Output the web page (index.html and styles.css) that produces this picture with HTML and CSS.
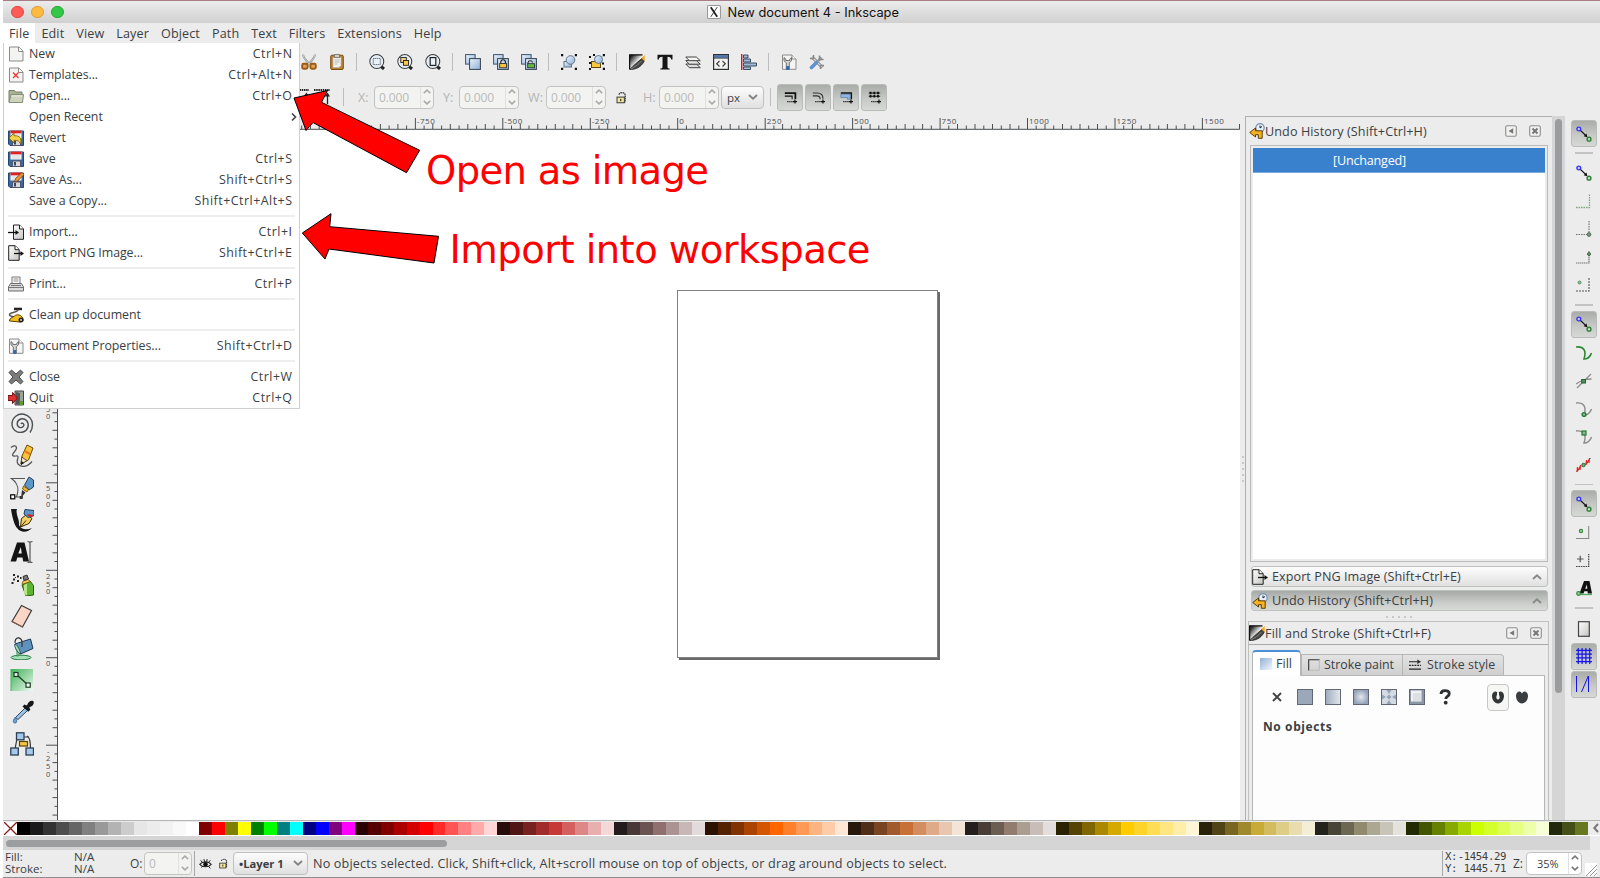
FILE: index.html
```html
<!DOCTYPE html>
<html lang="en">
<head>
<meta charset="utf-8">
<title>New document 4 - Inkscape</title>
<link rel="stylesheet" href="styles.css">
</head>
<body>
<svg class="defs" width="0" height="0">
  <defs>
    <linearGradient id="gBlue" x1="0" y1="0" x2="1" y2="1"><stop offset="0" stop-color="#eaf3fc"/><stop offset="1" stop-color="#8fb0d6"/></linearGradient>
    <linearGradient id="gGray" x1="0" y1="0" x2="1" y2="1"><stop offset="0" stop-color="#fff"/><stop offset="1" stop-color="#c4c4c0"/></linearGradient>
    <linearGradient id="gBlack" gradientUnits="userSpaceOnUse" x1="0" y1="0" x2="9" y2="8"><stop offset="0" stop-color="#000"/><stop offset=".3" stop-color="#2a2a2a"/><stop offset="1" stop-color="#fff"/></linearGradient>
    <linearGradient id="gGreen" x1="0" y1="0" x2="1" y2="1"><stop offset="0" stop-color="#3db358"/><stop offset=".6" stop-color="#a5dbb0"/><stop offset="1" stop-color="#f4fbf5"/></linearGradient>
    <linearGradient id="gSlate" x1="0" y1="0" x2="1" y2="0"><stop offset="0" stop-color="#9eabbd"/><stop offset="1" stop-color="#e4e8ee"/></linearGradient>
    <radialGradient id="gSlateR"><stop offset="0" stop-color="#e4e9f0"/><stop offset="1" stop-color="#95a3b8"/></radialGradient>
    <symbol id="new" viewBox="0 0 16 16"><path d="M1.500 1h9.500l4 4v10H1.500z" fill="#f3f3f1" stroke="#8a8c88"/><path d="M10.500 1v4.500H15" fill="#fff" stroke="#8a8c88"/></symbol>
    <symbol id="tmpl" viewBox="0 0 16 16"><path d="M1.500 1h9.500l4 4v10H1.500z" fill="#f3f3f1" stroke="#8a8c88"/><path d="M10.500 1v4.500H15" fill="#fff" stroke="#8a8c88"/><path d="M5 5.500l5.500 5.500M10.500 5.500L5 11" stroke="#e33" stroke-width="1.200"/></symbol>
    <symbol id="open" viewBox="0 0 16 16"><path d="M1 14V2.500h5.500l1 1.500H14v10z" fill="#aab294" stroke="#78806a"/><path d="M3 6.500h12.500l-1 8H1z" fill="#cdd3bd" stroke="#868e76"/><path d="M3.500 8h10.500" stroke="#eef0e6"/></symbol>
    <symbol id="save" viewBox="0 0 16 16"><path d="M.500 1h15v14.500H2l-1.500-1.500z" fill="#3c69a5" stroke="#234775"/><path d="M2.500 1h11v7.500h-11z" fill="#fff"/><path d="M2.500 .600h11v2.800h-11z" fill="#d22"/><path d="M3.500 5h9M3.500 7h9" stroke="#b9bcc0" stroke-width=".8"/><path d="M4.500 10h8v5.500h-8z" fill="#d8dadc" stroke="#556"/><path d="M6 11h2v3.500H6z" fill="#334a66"/></symbol>
    <symbol id="revert" viewBox="0 0 16 16"><use href="#save"/><path d="M1 8l5-5v2.800c6-.500 8 3 6.500 8.200C11.500 11 9.500 10 6 10.300V13z" fill="#f3d34a" stroke="#8a6a00" stroke-width=".9"/></symbol>
    <symbol id="saveas" viewBox="0 0 16 16"><use href="#save"/><path d="M6.500 10l1-3.500L14 .500l2 2-6.300 6.500z" fill="#e8963a" stroke="#7a4210" stroke-width=".8"/></symbol>
    <symbol id="import" viewBox="0 0 16 16"><path d="M5.500 1h6l4 4v10.300h-10z" fill="url(#gGray)" stroke="#222"/><path d="M11.500 1v4h4" fill="#fff" stroke="#222"/><path d="M0 8.500h8" stroke="#111" stroke-width="1.300"/><path d="M7.500 6l3.500 2.500L7.500 11z" fill="#111"/></symbol>
    <symbol id="export" viewBox="0 0 16 16"><path d="M.700 .700h6.500l4 4v10.600H.700z" fill="url(#gGray)" stroke="#222"/><path d="M7 .700v4h4" fill="#fff" stroke="#222"/><path d="M6 8.500h7" stroke="#111" stroke-width="1.300"/><path d="M12.500 6l3.500 2.500-3.500 2.500z" fill="#111"/></symbol>
    <symbol id="print" viewBox="0 0 16 16"><path d="M4 8V1h8v7" fill="#fff" stroke="#777"/><path d="M5.500 3h5M5.500 5h5" stroke="#888"/><path d="M2.500 7.500h11l2 3.500v4H.500v-4z" fill="#dcdcda" stroke="#6b6b69"/><path d="M1 11.500h14M3 9.500h10" stroke="#777"/></symbol>
    <symbol id="clean" viewBox="0 0 16 16"><path d="M6 .700h8v2.500H6z" fill="#222"/><path d="M10 2.500C10 6 1.500 5 1.500 7.500s3 1.500 5 2.500" fill="none" stroke="#555" stroke-width="1.500"/><path d="M1.500 14c0-3.500 3-3 5-5s7-1.500 8.500 2.500v2.500l-3 1z" fill="#f6bd22" stroke="#5b4300"/><circle cx="13" cy="13" r="2.500" fill="#222"/><circle cx="13" cy="13" r="1" fill="#ccc"/></symbol>
    <symbol id="docprop" viewBox="0 0 16 16"><path d="M1.500 1H11l4 4v10.300H1.500z" fill="#f5f5f3" stroke="#8b8d89"/><path d="M11 1v4h4" fill="#fff" stroke="#8b8d89"/><path d="M3 3.500v3.300l2.300 2v6.200h3V8.800l2.200-2V3.500L8.800 5v1.500h-4V5z" fill="#d4d6d8" stroke="#666" stroke-width=".9"/><path d="M5.300 12h3V16h-3z" fill="#3a68b0"/></symbol>
    <symbol id="prefs" viewBox="0 0 16 16"><path d="M3 3l10.500 10.500" stroke="#777" stroke-width="3"/><path d="M3 3l10.500 10.500" stroke="#ddd" stroke-width="1.400"/><path d="M12.500 3.500L8 8" stroke="#999" stroke-width="2.500"/><path d="M7.500 8.500L2.500 13.500" stroke="#5f92cf" stroke-width="3.600" stroke-linecap="round"/><path d="M1 4.500h3.500V1M11.500 15v-3.500H15M10.500 1.500v4h4" fill="none" stroke="#888" stroke-width="1.500"/></symbol>
    <symbol id="close" viewBox="0 0 16 16"><path d="M1 3.500L3.500 1 8 5l4.500-4L15 3.500 11 8l4 4.500-2.500 2.500L8 11l-4.500 4L1 12.500 5 8z" fill="#7b7d7b" stroke="#4b4d4b"/></symbol>
    <symbol id="quit" viewBox="0 0 16 16"><path d="M7 1h8.500v14H7z" fill="#9aa596" stroke="#444"/><path d="M8 2l4 1v12l-4-1z" fill="#555"/><path d="M11.500 11h3.500v4h-3.500z" fill="#5d9b33"/><path d="M0 5.500h4.500V2.500l5 5.500-5 5.500v-3H0z" fill="#d33" stroke="#7c1010"/></symbol>
    <symbol id="cut" viewBox="0 0 16 16"><path d="M2 .500c.5 4 4 6.500 6.500 10M14 .500c-.5 4-4 6.500-6.500 10" fill="none" stroke="#8f9390" stroke-width="2"/><path d="M2 .500c.5 4 4 6.500 6.500 10M14 .500c-.5 4-4 6.500-6.500 10" fill="none" stroke="#ecece8" stroke-width=".7"/><rect x="1.200" y="9.700" width="5.400" height="5.100" rx="1.500" fill="#e0a35a" stroke="#9a5c16" stroke-width="1.900"/><rect x="9.400" y="9.700" width="5.400" height="5.100" rx="1.500" fill="#e0a35a" stroke="#9a5c16" stroke-width="1.900"/></symbol>
    <symbol id="paste" viewBox="0 0 16 16"><rect x="1.700" y="1.200" width="12.600" height="14.300" rx="1.200" fill="#b98132" stroke="#7a4d10"/><path d="M4 3.500h8v8l-2 2H4z" fill="#f1f1ee" stroke="#b3b3ae" stroke-width=".7"/><path d="M5.500 .500h5v3h-5z" fill="#cfd0cc" stroke="#6d6e6a" stroke-width=".8"/><path d="M5.500 6h5M5.500 8h5M5.500 10h3" stroke="#aaa" stroke-width=".8"/></symbol>
    <symbol id="lens" viewBox="0 0 16 16"><path d="M11.500 12l3.500 3" stroke="#222" stroke-width="3"/><circle cx="7.800" cy="7.500" r="6.900" fill="#dce8f6" stroke="#3c4043" stroke-width="1.200"/><circle cx="7.800" cy="7.500" r="5.900" fill="none" stroke="#fff" stroke-width=".7"/></symbol>
    <symbol id="zsel" viewBox="0 0 16 16"><use href="#lens"/><rect x="4.300" y="4.500" width="7" height="6" fill="#e9f1fa" stroke="#333" stroke-dasharray="1 1" stroke-width=".9"/></symbol>
    <symbol id="zdraw" viewBox="0 0 16 16"><use href="#lens"/><rect x="3.800" y="3.500" width="5.500" height="5" fill="#f8d27a" stroke="#222" stroke-width=".9"/><rect x="6.500" y="6.500" width="5" height="4.800" fill="#f8c850" stroke="#222" stroke-width=".9"/></symbol>
    <symbol id="zpage" viewBox="0 0 16 16"><use href="#lens"/><rect x="5.200" y="3.600" width="5.600" height="7.800" fill="#eef2f7" stroke="#222" stroke-width="1.200"/></symbol>
    <symbol id="dup" viewBox="0 0 16 16"><rect x=".600" y=".600" width="9.500" height="9.500" fill="url(#gBlue)" stroke="#3a536e"/><rect x="4.600" y="4.600" width="10.800" height="10.800" fill="url(#gBlue)" stroke="#33404d"/></symbol>
    <symbol id="clone" viewBox="0 0 16 16"><use href="#dup"/><path d="M7.800 9.500V8a2.300 2.300 0 014.600 0v1.500" fill="none" stroke="#222" stroke-width="1.100"/><rect x="6.700" y="9.500" width="6.800" height="4.300" fill="#f8c23a" stroke="#222" stroke-width=".8"/></symbol>
    <symbol id="unclone" viewBox="0 0 16 16"><use href="#dup"/><path d="M7 10V8.500a2.300 2.300 0 014.500 0" fill="none" stroke="#222" stroke-width="1.100"/><rect x="6.700" y="9.700" width="6.800" height="4.100" fill="#60b846" stroke="#222" stroke-width=".8"/></symbol>
    <symbol id="group" viewBox="0 0 16 16"><rect x="3" y="7.500" width="7.500" height="5.500" fill="url(#gBlue)" stroke="#5a748e"/><circle cx="9.500" cy="6" r="4.300" fill="url(#gBlue)" stroke="#5a748e"/><path d="M0 0h2.200v2.200H0zM13.800 0H16v2.200h-2.200zM0 13.800h2.200V16H0zM13.800 13.800H16V16h-2.200z" fill="#111"/></symbol>
    <symbol id="ungroup" viewBox="0 0 16 16"><rect x="2.500" y="7.500" width="9" height="6" fill="#f8c93c" stroke="#5d4700"/><circle cx="9.500" cy="5.500" r="4" fill="url(#gBlue)" stroke="#5a748e"/><path d="M0 2h2v2H0zM4 0h2v2H4zM13.800 0H16v2.200h-2.200zM0 14h2v2H0zM13.800 13.800H16V16h-2.200zM0 8h2v2H0zM13 8.500h2v2h-2z" fill="#111"/></symbol>
    <symbol id="fillstroke" viewBox="0 0 16 16"><path d="M.600 .800H15L6 13 .600 15.300z" fill="url(#gBlack)"/><path d="M.600 15.300V.800H13.500" fill="none" stroke="#111" stroke-width="1.200"/><path d="M15.300 7L13 4.500C9.500 7 4 12 .700 15.500 5 15.500 11.500 14.500 15.300 7z" fill="#454543" stroke="#111" stroke-width=".7"/><path d="M2 15C6 13 9.500 10.500 12.500 7" stroke="#999" stroke-width=".8" fill="none"/><path d="M12.300 4L15.700 1v6.500z" fill="#f7a81c"/></symbol>
    <symbol id="text" viewBox="0 0 16 16"><path d="M.500 .800h15v4.700h-1.300c-.3-2-1-2.800-3.700-2.800v9.800c0 1.500.5 2 2.200 2V15.500H3.300V14.500c1.700 0 2.200-.5 2.200-2V2.700c-2.700 0-3.400.8-3.700 2.800H.500z" fill="#161616"/></symbol>
    <symbol id="layers" viewBox="0 0 16 16"><path d="M.800 10h10.500l4 3.700h-11z" fill="#ddd" stroke="#444"/><path d="M.800 6.500h10.500l4 3.700h-11z" fill="#e4e4e2" stroke="#444"/><path d="M.800 3h10.500l4 3.700h-11z" fill="#f6f6f4" stroke="#444"/></symbol>
    <symbol id="xml" viewBox="0 0 16 16"><rect x=".600" y=".600" width="14.800" height="14.800" fill="#f2f2f0" stroke="#2d3136" stroke-width="1.200"/><path d="M1 1h14v3H1z" fill="#5577a8"/><path d="M1 4.300h14" stroke="#2d3136" stroke-width=".7"/><path d="M6.500 7L3.700 9.700l2.800 2.800M9.500 7l2.800 2.700-2.800 2.800" fill="none" stroke="#444" stroke-width="1.200"/></symbol>
    <symbol id="align" viewBox="0 0 16 16"><path d="M.700 0v16" stroke="#d01818" stroke-width="1.400"/><path d="M2.500 1h4.500v3H2.500zM2.500 5h7v3h-7zM2.500 9h13v3h-13zM2.500 13h7v2.500h-7z" fill="#9fbbdc" stroke="#2d3e50" stroke-width=".9"/></symbol>
    <symbol id="lock" viewBox="0 0 16 16"><path d="M5 4.500C5 1 12.500 1 12.500 5v9" fill="none" stroke="#333" stroke-width="1.500" stroke-dasharray="2 .7"/><rect x="2.500" y="7.500" width="9" height="7" fill="#f6eaa0" stroke="#333" stroke-width="1.200"/><path d="M7 9.500v3" stroke="#443" stroke-width="1.600"/></symbol>
    <symbol id="aff1" viewBox="0 0 16 16"><path d="M1 2.700h13v7" fill="none" stroke="#111" stroke-width="2.200"/><path d="M1 6.300h9V10" fill="none" stroke="#111" stroke-width="1.300"/><path d="M4 13h8" stroke="#111" stroke-width="1.500" stroke-dasharray="1.500 1"/><path d="M11 13h5M13.500 10.500v5" stroke="#111" stroke-width="1.500"/></symbol>
    <symbol id="aff2" viewBox="0 0 16 16"><path d="M1 2.500h5.500c5 0 7 3 7 7M1 6h5c3 0 4 1.500 4 4" fill="none" stroke="#333" stroke-width="1.400"/><path d="M4 13h8" stroke="#111" stroke-width="1.500" stroke-dasharray="1.500 1"/><path d="M11 13h5M13.500 10.500v5" stroke="#111" stroke-width="1.500"/></symbol>
    <symbol id="aff3" viewBox="0 0 16 16"><path d="M1 2.500h13v7.500" fill="none" stroke="#111" stroke-width="1.700"/><path d="M1 4h11.500v6H9V8H1z" fill="#8fb6e6" stroke="#34618f" stroke-width=".6"/><path d="M4 13h8" stroke="#111" stroke-width="1.500" stroke-dasharray="1.500 1"/><path d="M11 13h5M13.500 10.500v5" stroke="#111" stroke-width="1.500"/></symbol>
    <symbol id="aff4" viewBox="0 0 16 16"><path d="M1 2.500h14M1 6.500h14" stroke="#111" stroke-width="1.200"/><path d="M2 2.500h13M2 6.500h13" stroke="#111" stroke-width="3" stroke-dasharray="2.300 2.300"/><path d="M4 13h8" stroke="#111" stroke-width="1.500" stroke-dasharray="1.500 1"/><path d="M11 13h5M13.500 10.500v5" stroke="#111" stroke-width="1.500"/></symbol>
    <symbol id="flat" viewBox="0 0 16 16"><path d="M0 1h16" stroke="#222" stroke-width="2" stroke-dasharray="1.500 .7"/><path d="M13.500 15V5" stroke="#222" stroke-width="1.300"/><path d="M10.500 7.500l3-4 2.500 4z" fill="#222"/></symbol>
    <symbol id="undo" viewBox="0 0 16 16"><circle cx="11" cy="4.800" r="4.200" fill="#e6effa" stroke="#7891b0" stroke-width="1.200"/><path d="M11 2.500V5l2-1.500" fill="none" stroke="#223" stroke-width="1"/><path d="M.700 9.500L6.500 5v2.800h6.700v7.500H9.300v-3.600H6.500V14z" fill="#f8b120" stroke="#4a3200" stroke-width=".9"/></symbol>
    <symbol id="nodes" viewBox="0 0 16 16"><path d="M4 4l7 6.700" stroke="#111" stroke-width="1.100"/><path d="M11.300 11.300L7.700 10.300l2.800-2.800z" fill="#111"/><circle cx="2.800" cy="3" r="1.900" fill="#c9c9f5" stroke="#33e" stroke-width="1.400"/><circle cx="13" cy="13.200" r="1.900" fill="#c5dcc7" stroke="#297f34" stroke-width="1.400"/></symbol>
    <symbol id="s1" viewBox="0 0 16 16"><path d="M0 14.500h13.500V1" fill="none" stroke="#82a584" stroke-width="1.300" stroke-dasharray="1.600 .9"/></symbol>
    <symbol id="s2" viewBox="0 0 16 16"><path d="M0 13.500h13V0" fill="none" stroke="#777" stroke-width="1.200" stroke-dasharray="1.600 .9"/><circle cx="13" cy="13.500" r="1.900" fill="#7a8f80" stroke="#5a7560"/></symbol>
    <symbol id="s3" viewBox="0 0 16 16"><path d="M0 14h13V2" fill="none" stroke="#777" stroke-width="1.200" stroke-dasharray="1.500 .5"/><circle cx="13" cy="5" r="1.500" fill="#7a8f80" stroke="#3d6a46"/></symbol>
    <symbol id="s4" viewBox="0 0 16 16"><path d="M0 14h13V1" fill="none" stroke="#555" stroke-width="1.100" stroke-dasharray="2 1"/><circle cx="3.500" cy="5.500" r="1.500" fill="#93b598" stroke="#5b9463"/></symbol>
    <symbol id="c0" viewBox="0 0 16 16"><path d="M0 2c7-1 11 3 8 12 4 0 6-2 7.500-6" fill="none" stroke="#2f8736" stroke-width="1.600"/></symbol>
    <symbol id="cg" viewBox="0 0 16 16"><path d="M0 2c7-1 11 3 8 12 4 0 6-2 7.500-6" fill="none" stroke="#8b8d8b" stroke-width="1.400"/></symbol>
    <symbol id="c1" viewBox="0 0 16 16"><path d="M1 15L15 1M0 11c6-4 9-5 15.500-5" fill="none" stroke="#8b8d8b" stroke-width="1.300"/><rect x="5.700" y="6.500" width="3.800" height="3.500" fill="#5b8d64" stroke="#1c662b"/></symbol>
    <symbol id="c2" viewBox="0 0 16 16"><use href="#cg"/><circle cx="8" cy="13.500" r="1.900" fill="#8fb6a0" stroke="#227a32" stroke-width="1.400"/></symbol>
    <symbol id="c3" viewBox="0 0 16 16"><use href="#cg"/><rect x="6" y="2" width="4" height="4" fill="#8fb6a0" stroke="#227a32" stroke-width="1.200"/></symbol>
    <symbol id="c4" viewBox="0 0 16 16"><path d="M0 15L15 1" stroke="#999"/><path d="M1.500 10l-.5 5M4.500 8l-.5 5M1.500 14l3-5M10.500 3l-.5 5M13.500 1L13 6M10.500 7l3-5" stroke="#d22" stroke-width="1.200"/><circle cx="7.500" cy="8" r="1.700" fill="#7cad88" stroke="#1c662b"/></symbol>
    <symbol id="o1" viewBox="0 0 16 16"><path d="M0 14.500h12.700V2" fill="none" stroke="#888" stroke-width="1.100"/><circle cx="5" cy="7" r="1.600" fill="#b5d6ba" stroke="#2f8a3b" stroke-width="1.200"/></symbol>
    <symbol id="o2" viewBox="0 0 16 16"><path d="M0 14.500h12.700V2" fill="none" stroke="#444" stroke-width="1.200" stroke-dasharray="1.600 .8"/><path d="M1 7h6.500M4.200 3.700v6.600" stroke="#555" stroke-width="1.200"/></symbol>
    <symbol id="o3" viewBox="0 0 16 16"><path d="M3.500 13.500L8 1h5.500l2.500 12.500h-4.200l-.3-2.300H8.300l-.8 2.300zM9.200 8.700h2.100L10.900 4.500z" fill="#111"/><path d="M3 14.500h13" stroke="#54a85b" stroke-width="1.300"/><circle cx="2.500" cy="13.500" r="1.800" fill="#a9cfb0" stroke="#2d8a38" stroke-width="1.200"/></symbol>
    <symbol id="page" viewBox="0 0 16 16"><rect x="2.500" y=".700" width="10.800" height="14.600" fill="url(#gGray)" stroke="#444" stroke-width="1.200"/></symbol>
    <symbol id="grid" viewBox="0 0 16 16"><path d="M0 2.300h16M0 6.100h16M0 9.900h16M0 13.700h16M2.300 0v16M6.100 0v16M9.900 0v16M13.700 0v16" stroke="#1414e6" stroke-width="1.200"/></symbol>
    <symbol id="guide" viewBox="0 0 16 16"><path d="M.500 0v16M12.500 0v16M12.300 0L5.500 16" stroke="#1414e6" stroke-width="1" fill="none"/></symbol>
    <symbol id="spiral" viewBox="0 0 24 24"><path d="M11 12c1-2 4 0 2.500 2.200-2 2.800-6.500 1-6.300-2.700.3-4.500 6-6.500 9.300-3 3.500 4 1.500 10-3.500 11.500C7 21.700 2 17.500 2 12 2 5.500 8 1 14 2.200c5 1 8.500 5.500 8.500 10.300 0 3-1 6-2.500 8" fill="none" stroke="#4a4f52" stroke-width="1.400"/></symbol>
    <symbol id="pencil" viewBox="0 0 24 24"><path d="M1 3.500c5-4 7 0 4 3.500S1 12.500 6 12s-1 4.500 2 8 9 3.500 14-2.500" fill="none" stroke="#555" stroke-width="1.200"/><path d="M11 20l1-8 5-11 6 3-4.500 12z" fill="#f8c33a" stroke="#6b4d00"/><path d="M14.500 7l5.500 3" stroke="#e8781c" stroke-width="2"/><path d="M11 20.500l.8-7.500 5 3.500z" fill="#f4e3c2" stroke="#333" stroke-width=".8"/><path d="M11 21l.5-4 2.500 2z" fill="#111"/></symbol>
    <symbol id="pen" viewBox="0 0 24 24"><path d="M15 2.500H1.500C9 8 9 14 6.500 21M2 21h11" fill="none" stroke="#555" stroke-width="1.200"/><path d="M14.500 9l4.500-8 4.500 3v7l-4.500 3z" fill="#5d97c9" stroke="#22405c"/><path d="M13.500 10l5 3.500-1.500 2.500-4.500-3z" fill="#f4b928" stroke="#5d4300" stroke-width=".8"/><path d="M12 14l3.500 2.500-4.500 5.500z" fill="#333"/><rect x=".700" y="18.800" width="4" height="4" fill="#fff" stroke="#111" stroke-width="1.300"/><rect x="9.700" y="20" width="3" height="3" fill="#333"/></symbol>
    <symbol id="callig" viewBox="0 0 24 24"><path d="M1 1h6C5 6 10 12 9 17c2 5 8 5 13 3-4 4.500-11 5-14.500.500C4 17 2 8 1 1z" fill="#161616"/><path d="M10.500 19l1-8.500 5-4 5.500 4-3 5z" fill="#f2cf68" stroke="#3d2c00"/><path d="M11 18.500l5-6" stroke="#3d2c00"/><path d="M15 1.500l9 1v5l-6 2-4-3.500z" fill="#5d97c9" stroke="#22405c"/><path d="M18 6l5 1-1 2.500-5-2z" fill="#d22"/></symbol>
    <symbol id="atext" viewBox="0 0 24 24"><path d="M.500 21.500L7 2.500h7.500L19 21.500h-5.800l-.7-4H7.300l-1.200 4zM8.300 13.500h3.500L10.800 7z" fill="#141414"/><path d="M17.500 1.500c2.500 0 2.500 1 2.500 1s0-1 2.500-1M17.500 22.500c2.500 0 2.500-1 2.500-1s0 1 2.500 1M20 2.500v19" fill="none" stroke="#555" stroke-width="1.200"/></symbol>
    <symbol id="spray" viewBox="0 0 24 24"><path d="M3 2h2v2H3zM7 3.500h2v2H7zM3 6.500h2v2H3zM7 8h2v2H7zM1.500 10h2v2h-2zM10 5h1.500v2H10zM5 5h1v1H5z" fill="#222"/><path d="M12 13l8-4 3.500 4.500V23L16 24z" fill="#5cb531" stroke="#2e5f14"/><path d="M14 22V13l3-1.500v12z" fill="#b8e48c"/><path d="M12 12.500l1-3.500 5-1.500 2.500 2z" fill="#f2ca63" stroke="#6b4d00" stroke-width=".8"/><path d="M13 4.500l4-1.500 1.500 4-4.500 1.500z" fill="#777" stroke="#333"/></symbol>
    <symbol id="eraser" viewBox="0 0 24 24"><path d="M2 17.500L11.500 1.500 21.500 6.500 12.500 23z" fill="#fbd5c6" stroke="#3a3a3a" stroke-width="1.200"/><path d="M2 17.500l10.500 5.500" stroke="#8c5a4a"/></symbol>
    <symbol id="bucket" viewBox="0 0 24 24"><ellipse cx="11" cy="21.500" rx="10" ry="2.300" fill="#a6e0b6" stroke="#2d7d45"/><path d="M6.500 20c2-4-2-8-1-12l4 9-1 3z" fill="#7fd39a" stroke="#2d7d45" stroke-width=".8"/><path d="M5 8L20.500 3l2.500 9.500L10.500 18z" fill="#5f93bd" stroke="#1c3850"/><path d="M5 8c-1.500 2 3 9.500 5.500 10 0-3-3-9-5.500-10z" fill="#a6e0b6" stroke="#1c3850" stroke-width=".8"/><path d="M5 7c0-6 5-7 7-2v6" fill="none" stroke="#333" stroke-width="1.200"/></symbol>
    <symbol id="gradient" viewBox="0 0 24 24"><rect x="1" y="1" width="22" height="22" fill="url(#gGreen)"/><path d="M1 1v22" stroke="#45b45d"/><path d="M7 7l10.500 9.500" stroke="#1d3b22" stroke-width="1.200"/><rect x="4" y="4.500" width="4" height="4" fill="#dff3e2" stroke="#1d3b22" stroke-width="1.200"/><rect x="16" y="15" width="4.200" height="4.200" fill="#fff" stroke="#1d3b22" stroke-width="1.200"/></symbol>
    <symbol id="dropper" viewBox="0 0 24 24"><path d="M5.500 17.500L15 8l2.500 2.500-9.500 9z" fill="#9fc3e4" stroke="#2c4864"/><path d="M12.500 6.500l2-2 2.500 1C18 2 21 0 23.300 1.200c1.500 2-.5 5-4 6l1 2.500-2 2z" fill="#15181a"/><path d="M5 17.500c-2.500 3.500-2 5.500 0 5.500s2.500-2 0-5.500z" fill="#6fa4d6" stroke="#2c5a88" stroke-width=".8"/></symbol>
    <symbol id="conn" viewBox="0 0 24 24"><path d="M5 17l2.500-13M17 4c3 1 3.500 6 3.500 13M14 5h5" fill="none" stroke="#333" stroke-width="1.200"/><rect x="6.500" y=".800" width="7.500" height="7" fill="#a6c8ec" stroke="#2c3e50" stroke-width="1.300"/><rect x="9.500" y="9.500" width="8" height="4.500" fill="#f6c544" stroke="#5d4300" stroke-width="1.200"/><rect x=".800" y="16" width="7.500" height="7" fill="#a6c8ec" stroke="#2c3e50" stroke-width="1.300"/><rect x="16" y="16" width="7.500" height="7" fill="#a6c8ec" stroke="#2c3e50" stroke-width="1.300"/></symbol>
    <symbol id="eye" viewBox="0 0 16 16"><path d="M1 9c3-4 11-4 14 0-3 4-11 4-14 0z" fill="#eee" stroke="#222" stroke-width="1.300"/><circle cx="8" cy="8.800" r="2.800" fill="#111"/><path d="M2 4l2.500 3M6 2.500l1 3.500M10 2.500L9.500 6M14 4l-2.500 3M3 13l2-2M12 12l2 2" stroke="#222" stroke-width="1.200"/></symbol>
    <symbol id="up" viewBox="0 0 10 6"><path d="M1 5l4-3.700L9 5" fill="none" stroke="currentColor" stroke-width="1.900"/></symbol>
    <symbol id="down" viewBox="0 0 10 6"><path d="M1 1l4 3.700L9 1" fill="none" stroke="currentColor" stroke-width="1.900"/></symbol>
    <symbol id="winleft" viewBox="0 0 12 12"><rect x=".700" y=".700" width="10.600" height="10.600" rx="1.500" fill="#f1f1f0" stroke="#8d8f8e" stroke-width="1.100"/><path d="M8.200 3.300v5.400L3.500 6z" fill="#777"/></symbol>
    <symbol id="winx" viewBox="0 0 12 12"><rect x=".700" y=".700" width="10.600" height="10.600" rx="1.500" fill="#f1f1f0" stroke="#8d8f8e" stroke-width="1.100"/><path d="M3.500 3.500l5 5M8.500 3.500l-5 5" stroke="#777" stroke-width="2"/></symbol>
  </defs>
</svg>

<div class="window">
  <header class="titlebar">
    <div class="lights"><i class="light red"></i><i class="light amber"></i><i class="light green"></i></div>
    <div class="title"><svg class="x11" viewBox="0 0 13 13"><rect x=".500" y=".500" width="12" height="12" rx="1" fill="#fff" stroke="#999"/><path d="M3.500 2l6 9" stroke="#222" stroke-width="1.700"/><path d="M9.500 2l-6 9" stroke="#222" stroke-width=".8"/></svg><span>New document 4 - Inkscape</span></div>
  </header>
  <nav class="menubar"><span class="active">File</span><span>Edit</span><span>View</span><span>Layer</span><span>Object</span><span>Path</span><span>Text</span><span>Filters</span><span>Extensions</span><span>Help</span></nav>

  <div class="commands">
    <svg><use href="#cut"/></svg><svg><use href="#paste"/></svg><i></i>
    <svg><use href="#zsel"/></svg><svg><use href="#zdraw"/></svg><svg><use href="#zpage"/></svg><i></i>
    <svg><use href="#dup"/></svg><svg><use href="#clone"/></svg><svg><use href="#unclone"/></svg><i></i>
    <svg><use href="#group"/></svg><svg><use href="#ungroup"/></svg><i></i>
    <svg><use href="#fillstroke"/></svg><svg><use href="#text"/></svg><svg><use href="#layers"/></svg><svg><use href="#xml"/></svg><svg><use href="#align"/></svg><i></i>
    <svg><use href="#docprop"/></svg><svg><use href="#prefs"/></svg>
  </div>

  <div class="controls">
    <svg class="flat"><use href="#flat"/></svg><svg class="flat"><use href="#flat"/></svg><i class="vsep s1"></i>
    <label class="lx">X:</label><div class="spin"><span>0.000</span><b><svg><use href="#up"/></svg><svg><use href="#down"/></svg></b></div>
    <label class="ly">Y:</label><div class="spin"><span>0.000</span><b><svg><use href="#up"/></svg><svg><use href="#down"/></svg></b></div>
    <label class="lw">W:</label><div class="spin"><span>0.000</span><b><svg><use href="#up"/></svg><svg><use href="#down"/></svg></b></div>
    <svg class="lock"><use href="#lock"/></svg>
    <label class="lh">H:</label><div class="spin"><span>0.000</span><b><svg><use href="#up"/></svg><svg><use href="#down"/></svg></b></div>
    <div class="combo unit"><span>px</span><svg><use href="#down"/></svg></div><i class="vsep s2"></i>
    <div class="toggles"><span class="tog"><svg><use href="#aff1"/></svg></span><span class="tog"><svg><use href="#aff2"/></svg></span><span class="tog"><svg><use href="#aff3"/></svg></span><span class="tog"><svg><use href="#aff4"/></svg></span></div>
  </div>

  <main class="work">
    <div class="toolbox">
      <svg><use href="#spiral"/></svg><svg><use href="#pencil"/></svg><svg><use href="#pen"/></svg><svg><use href="#callig"/></svg><svg><use href="#atext"/></svg><svg><use href="#spray"/></svg><svg><use href="#eraser"/></svg><svg><use href="#bucket"/></svg><svg><use href="#gradient"/></svg><svg><use href="#dropper"/></svg><svg><use href="#conn"/></svg>
    </div>
    <div class="stage">
      <svg class="hruler" id="hruler"></svg>
      <svg class="vruler" id="vruler"></svg>
      <div class="canvas"><div class="paper"></div></div>
    </div>
    <div class="grip"><i></i><i></i><i></i><i></i><i></i></div>
    <aside class="dock">
      <div class="dockhead"><svg class="ic"><use href="#undo"/></svg><span>Undo History (Shift+Ctrl+H)</span><svg class="wb"><use href="#winleft"/></svg><svg class="wb"><use href="#winx"/></svg></div>
      <div class="history"><div class="hrow">[Unchanged]</div></div>
      <div class="fold"><svg class="ic"><use href="#export"/></svg><span>Export PNG Image (Shift+Ctrl+E)</span><svg class="ch"><use href="#up"/></svg></div>
      <div class="fold dark"><svg class="ic"><use href="#undo"/></svg><span>Undo History (Shift+Ctrl+H)</span><svg class="ch"><use href="#up"/></svg></div>
      <div class="dots"><i></i><i></i><i></i><i></i><i></i></div>
      <div class="dockhead framed"><svg class="ic"><use href="#fillstroke"/></svg><span>Fill and Stroke (Shift+Ctrl+F)</span><svg class="wb"><use href="#winleft"/></svg><svg class="wb"><use href="#winx"/></svg></div>
      <div class="fsbody">
        <div class="tabs">
          <div class="tab on"><i class="fillchip"></i>Fill</div>
          <div class="tab paint"><svg viewBox="0 0 12 12"><path d="M.700 11.500V.700H11.500" fill="none" stroke="#333" stroke-width="1.100"/><path d="M11.300 1v10.300H1" fill="none" stroke="#bbb"/></svg>Stroke paint</div>
          <div class="tab style"><svg viewBox="0 0 13 12"><path d="M0 2.500h9M0 10.500h13" stroke="#222" stroke-width="1.300"/><path d="M9 0l4 2.500L9 5z" fill="#222"/><path d="M0 6.500h13" stroke="#222" stroke-width="1.300" stroke-dasharray="2 1"/></svg>Stroke style</div>
        </div>
        <div class="notebook">
          <div class="paints">
            <svg viewBox="0 0 16 16"><path d="M4 4l8 8M12 4l-8 8" stroke="#444" stroke-width="1.900"/></svg>
            <svg viewBox="0 0 16 16"><rect x=".500" y=".500" width="15" height="15" fill="#9ba8ba" stroke="#626873"/></svg>
            <svg viewBox="0 0 16 16"><rect x=".500" y=".500" width="15" height="15" fill="url(#gSlate)" stroke="#626873"/></svg>
            <svg viewBox="0 0 16 16"><rect x=".500" y=".500" width="15" height="15" fill="url(#gSlateR)" stroke="#626873"/></svg>
            <svg viewBox="0 0 16 16"><rect x=".500" y=".500" width="15" height="15" fill="#d3dae3" stroke="#626873"/><path d="M5.500 1h5L8 5zM5.500 15h5L8 11zM1 5.500v5L5 8zM15 5.500v5L11 8zM8 5.500L10.500 8 8 10.500 5.500 8z" fill="#95a3b7"/></svg>
            <svg viewBox="0 0 16 16"><rect x=".500" y=".500" width="15" height="15" fill="#8c96a4" stroke="#626873"/><rect x="2" y="1.500" width="10.500" height="11" fill="#f0f1f3"/><path d="M4 4h8v8H4z" fill="#dcdfe4"/></svg>
            <svg viewBox="0 0 16 16"><path d="M4 5C4 .500 12.300.500 12.300 4.500c0 3-3.500 2.800-3.500 5.500" fill="none" stroke="#2d2f31" stroke-width="2.800"/><circle cx="8.700" cy="13.700" r="1.900" fill="#2d2f31"/></svg>
            <span class="rule"><svg viewBox="0 0 12 13"><path d="M2 1c2-1 3 0 4 1.500C7 1 8 0 10 1c3 2 2 6 1 8-2 4.500-8 4.500-10 0C0 7 -1 3 2 1z" fill="#333637"/><path d="M6 1.500v3" stroke="#f6f6f5" stroke-width="2"/><ellipse cx="6" cy="6" rx="1.700" ry="2.500" fill="#f6f6f5"/></svg></span>
            <svg class="solid" viewBox="0 0 12 13"><path d="M2 1c2-1 3 0 4 1.500C7 1 8 0 10 1c3 2 2 6 1 8-2 4.500-8 4.500-10 0C0 7 -1 3 2 1z" fill="#3b3e40"/></svg>
          </div>
          <div class="noobj">No objects</div>
        </div>
      </div>
    </aside>
    <div class="vscroll"><i></i></div>
    <div class="snapbar">
      <span class="tog"><svg><use href="#nodes"/></svg></span><i class="a"></i>
      <span><svg><use href="#nodes"/></svg></span><span><svg><use href="#s1"/></svg></span><span><svg><use href="#s2"/></svg></span><span><svg><use href="#s3"/></svg></span><span><svg><use href="#s4"/></svg></span><i class="b"></i>
      <span class="tog"><svg><use href="#nodes"/></svg></span><span><svg><use href="#c0"/></svg></span><span><svg><use href="#c1"/></svg></span><span><svg><use href="#c2"/></svg></span><span><svg><use href="#c3"/></svg></span><span><svg><use href="#c4"/></svg></span><i class="c"></i>
      <span class="tog"><svg><use href="#nodes"/></svg></span><span><svg><use href="#o1"/></svg></span><span><svg><use href="#o2"/></svg></span><span><svg><use href="#o3"/></svg></span><i class="d"></i>
      <span><svg><use href="#page"/></svg></span><span class="tog"><svg><use href="#grid"/></svg></span><span class="tog"><svg><use href="#guide"/></svg></span>
    </div>
  </main>

  <div class="palette"><svg class="none" viewBox="0 0 13 13"><path d="M0 0h13v13H0z" fill="#fff"/><path d="M0 0l13 13M13 0L0 13" stroke="#8a1a1a" stroke-width="1.300"/></svg><div class="swatches" id="swatches"></div><svg class="more" viewBox="0 0 6 10"><path d="M5 1L1.300 5 5 9" fill="none" stroke="#777" stroke-width="1.900"/></svg></div>
  <div class="hscroll"><i></i></div>
  <footer class="status">
    <div class="fs"><span>Fill:</span><span>N/A</span><span>Stroke:</span><span>N/A</span></div>
    <label>O:</label><div class="spin op"><span>0</span><b><svg><use href="#up"/></svg><svg><use href="#down"/></svg></b></div>
    <i class="bar"></i><svg class="eye"><use href="#eye"/></svg><svg class="lk"><use href="#lock"/></svg>
    <div class="combo layer"><span>•Layer 1</span><svg><use href="#down"/></svg></div>
    <div class="msg">No objects selected. Click, Shift+click, Alt+scroll mouse on top of objects, or drag around objects to select.</div>
    <div class="coords"><span>X:</span><span>-1454.29</span><span>Y:</span><span>1445.71</span></div>
    <label class="z">Z:</label><div class="spin zoom"><span>35%</span><b><svg><use href="#up"/></svg><svg><use href="#down"/></svg></b></div>
    <svg class="corner" viewBox="0 0 12 13"><path d="M0 0h12v13H0z" fill="#fff"/><path d="M1 13L12 2M5 13l7-7M9 13l3-3" stroke="#999"/></svg>
  </footer>
</div>

<div class="menu">
  <div class="mi"><svg><use href="#new"/></svg><span>New</span><kbd>Ctrl+N</kbd></div>
  <div class="mi"><svg><use href="#tmpl"/></svg><span>Templates...</span><kbd>Ctrl+Alt+N</kbd></div>
  <div class="mi"><svg><use href="#open"/></svg><span>Open...</span><kbd>Ctrl+O</kbd></div>
  <div class="mi"><svg></svg><span>Open Recent</span><svg class="sub" viewBox="0 0 6 10"><path d="M1 1.500L4.500 5 1 8.500" fill="none" stroke="#444" stroke-width="1.700"/></svg></div>
  <div class="mi"><svg><use href="#revert"/></svg><span>Revert</span></div>
  <div class="mi"><svg><use href="#save"/></svg><span>Save</span><kbd>Ctrl+S</kbd></div>
  <div class="mi"><svg><use href="#saveas"/></svg><span>Save As...</span><kbd>Shift+Ctrl+S</kbd></div>
  <div class="mi"><svg></svg><span>Save a Copy...</span><kbd>Shift+Ctrl+Alt+S</kbd></div>
  <hr>
  <div class="mi"><svg><use href="#import"/></svg><span>Import...</span><kbd>Ctrl+I</kbd></div>
  <div class="mi"><svg><use href="#export"/></svg><span>Export PNG Image...</span><kbd>Shift+Ctrl+E</kbd></div>
  <hr>
  <div class="mi"><svg><use href="#print"/></svg><span>Print...</span><kbd>Ctrl+P</kbd></div>
  <hr>
  <div class="mi"><svg><use href="#clean"/></svg><span>Clean up document</span></div>
  <hr>
  <div class="mi"><svg><use href="#docprop"/></svg><span>Document Properties...</span><kbd>Shift+Ctrl+D</kbd></div>
  <hr>
  <div class="mi"><svg><use href="#close"/></svg><span>Close</span><kbd>Ctrl+W</kbd></div>
  <div class="mi"><svg><use href="#quit"/></svg><span>Quit</span><kbd>Ctrl+Q</kbd></div>
</div>

<svg class="notes" viewBox="0 0 1600 878">
  <g fill="#f00" stroke="#000" stroke-width="1">
    <path d="M294 98L327.500 90.500 321.500 102.300 419.700 150.300 406.500 172.700 313 122.500 306 130.500z"/>
    <path d="M302.300 233L331 213.700 329.700 226.700 438.500 236.300 434 263 329 249 325 259z"/>
  </g>
  <text x="426" y="183.500" textLength="283">Open as image</text>
  <text x="449.500" y="263" textLength="421">Import into workspace</text>
</svg>
<script src="app.js"></script>
</body>
</html>
```
FILE: styles.css
```css
* { box-sizing: border-box; }
body { margin: 0; width: 1600px; height: 878px; position: relative; overflow: hidden; background: #fff; font-family: "Open Sans", "Noto Sans", sans-serif; font-size: 12.6px; color: #3a4043; }
svg { display: block; flex: none; }
.defs { position: absolute; }
.window { height: 878px; margin-left: 3px; background: #ececec; display: flex; flex-direction: column; border-bottom: 1.500px solid #8f8d8d; }
.window > * { flex: none; }

.titlebar { height: 23px; border-top: 1px solid #a97d84; background: linear-gradient(#ececec, #d0d0d0); display: flex; align-items: center; }
.lights { display: flex; gap: 7.500px; padding-left: 8px; }
.light { width: 12.500px; height: 12.500px; border-radius: 50%; border: 1px solid; }
.red { background: #fc5b57; border-color: #e2463f; }
.amber { background: #fcbb3f; border-color: #e0a033; }
.green { background: #33c748; border-color: #24a835; }
.title { display: flex; align-items: center; gap: 7px; margin-left: 643px; font: 12.800px Inter, sans-serif; color: #111; }
.x11 { width: 14px; height: 14px; }

.menubar { height: 20px; display: flex; align-items: center; gap: 12px; padding-left: 6px; line-height: 20px; letter-spacing: .12px; }
.menubar span { padding-top: 1px; height: 20px; }
.menubar .active { background: #fff; margin: 0 -6px 0 -6px; padding: 1px 6px 0 6px; }

.commands { height: 37px; padding-left: 292px; display: flex; align-items: center; }
.commands svg { width: 16px; height: 16px; margin: 0 6px; }
.commands i { width: 1px; height: 18px; margin: 0 6px 0 5px; background: #bdbdbd; }

.controls { height: 35px; padding: 1px 0 2px 290px; display: flex; align-items: center; color: #b3b5b4; }
.flat { width: 16px; height: 16px; margin-right: 5px; }
.vsep { width: 1px; height: 18px; background: #bdbdbd; }
.s1 { margin: 0 14px 0 8px; }
.s2 { margin: 0 6px; }
.lx { width: 16px; } .ly { width: 16px; margin-left: 9px; } .lw { width: 18px; margin-left: 9px; } .lh { width: 16px; margin-left: 15px; }
.lock { width: 13px; height: 15px; margin-left: 9px; }
.spin { width: 60px; height: 23px; border: 1.500px solid #c2c4c2; border-radius: 4px; background: #f3f3f1; display: flex; align-items: center; justify-content: space-between; padding-left: 4px; color: #b9bbb9; font-size: 12px; letter-spacing: -.1px; }
.spin b { width: 13px; height: 100%; border-left: 1px solid #e0e0de; display: flex; flex-direction: column; justify-content: space-around; align-items: center; color: #a9aba9; }
.spin b svg { width: 8px; height: 5px; }
.combo { height: 23px; border: 1.500px solid #bfc1bf; border-radius: 4px; background: linear-gradient(#fcfcfc, #e0e0e0); display: flex; align-items: center; justify-content: space-between; padding: 0 5px; color: #3a4043; }
.combo svg { width: 10px; height: 6px; color: #838583; }
.unit { width: 43px; margin-left: 2px; }
.unit span { font-size: 11.500px; }
.toggles { display: flex; gap: 2px; }
.tog { width: 26px; height: 27px; border: 1px solid #b9bbb9; border-radius: 3px; background: linear-gradient(#a9aca9, #c9cbc9 60%, #d6d8d6); display: flex; align-items: center; justify-content: center; }
.controls .tog svg { width: 13px; height: 13px; }

.work { height: 705px; display: flex; }
.toolbox { width: 43px; padding: 293px 0 0 7px; }
.toolbox svg { width: 24px; height: 24px; margin: 4px 0 8px; }
.toolbox svg + svg { margin-top: 0; }
.stage { width: 1194px; display: grid; grid-template: 15px 690px / 12px 1182px; }
.hruler { grid-area: 1 / 1 / 2 / 3; width: 1194px; height: 15px; }
.vruler { grid-area: 2 / 1; width: 12px; height: 690px; }
.canvas { grid-area: 2 / 2; background: #fff; }
.paper { width: 261px; height: 368px; margin: 160px 0 0 619px; border: 1px solid #808080; box-shadow: 2px 2px 0 #6a6a6a; }
.grip { width: 5px; padding-top: 341px; display: flex; flex-direction: column; align-items: center; gap: 4px; }
.grip i, .dots i { width: 2px; height: 2px; background: #bbb; border-radius: 1px; }

.dock { width: 307px; margin-top: 1px; border-left: 1.500px solid #aeb0ae; border-top: 1.500px solid #aeb0ae; display: flex; flex-direction: column; padding-left: 3px; }
.dock > * { flex: none; }
.dock .ic { width: 16px; height: 16px; }
.dockhead { height: 28px; display: flex; align-items: center; letter-spacing: .1px; }
.dockhead span { flex: 1; }
.wb { width: 12px; height: 12px; margin-right: 12px; }
.dockhead .wb:last-child { margin-right: 11px; }
.history { height: 417px; width: 298px; margin-left: 1px; border: 1.500px solid #b9bbb9; padding: 2px; background: linear-gradient(#fff, #fff) content-box, #ececec; }
.hrow { height: 25px; background: #3a81cd; color: #fff; line-height: 25px; padding-left: 80px; border-bottom: 1px solid #7aa9dd; letter-spacing: -.2px; }
.fold { height: 21px; width: 297px; margin: 4px 0 0 2px; border: 1.500px solid #bfc1bf; border-radius: 3px; background: linear-gradient(#fdfdfd, #e0e0e0); display: flex; align-items: center; letter-spacing: .07px; }
.fold + .fold { margin-top: 3px; }
.fold span { flex: 1; padding-left: 4px; }
.dark { background: linear-gradient(#a6aaa6, #c9cbc9 60%, #d8dad8); }
.ch { width: 10px; height: 6px; margin-right: 5px; color: #888a88; }
.dots { height: 10px; display: flex; gap: 4px; justify-content: center; align-items: center; padding-top: 2px; margin-left: -4px; }
.dockhead.framed { height: 24px; width: 301px; margin-left: -1px; border: 1px solid #bfc1bf; border-bottom: 1.500px solid #aaa; letter-spacing: .15px; }
.dockhead.framed .wb:last-child { margin-right: 6px; }
.fsbody { flex: 1 1 0; min-height: 0; width: 301px; margin-left: -1px; border: solid #bfc1bf; border-width: 0 1px; padding: 4px 3px 0; display: flex; flex-direction: column; }
.tabs { display: flex; align-items: flex-end; height: 26px; flex: none; }
.tab { height: 21px; border: 1px solid #b5b7b5; border-bottom: 0; background: linear-gradient(#e3e3e3, #cfcfcf); display: flex; align-items: center; gap: 4px; padding-left: 6px; line-height: 18px; white-space: nowrap; }
.tab svg { width: 12px; height: 12px; }
.tab.on { height: 26px; width: 49px; background: #fff; border-top: 2px solid #4a90d9; border-radius: 4px 4px 0 0; margin-bottom: -1px; padding-left: 7px; z-index: 1; }
.fillchip { width: 12px; height: 12px; background: linear-gradient(135deg, #93b0d6, #f3f7fc); }
.tab.paint { width: 102px; font-size: 12.400px; }
.tab.style { width: 101px; border-left: 0; border-radius: 0 4px 0 0; font-size: 12.400px; gap: 6px; letter-spacing: .1px; }
.notebook { flex: 1; background: #fdfdfd; border: 1px solid #b5b7b5; border-bottom: 0; width: 293px; }
.paints { height: 42px; display: flex; align-items: center; padding-left: 16px; gap: 12px; }
.paints > svg { width: 16px; height: 16px; }
.rule { width: 22px; height: 27px; border: 1px solid #c6c8c6; border-radius: 4px; margin-left: 22px; display: flex; align-items: center; justify-content: center; background: #f6f6f5; }
.rule svg, .paints > .solid { width: 12px; height: 13px; }
.paints > .solid { margin-left: -5px; }
.noobj { padding-left: 10px; font-weight: 700; font-size: 12px; line-height: 17px; letter-spacing: .6px; }
.vscroll { width: 13px; margin-top: 1px; background: #d5d5d5; padding: 3px 3px 0; }
.vscroll i { display: block; width: 7px; height: 574px; border-radius: 4px; background: #9a9c9d; }

.snapbar { width: 35px; padding: 5px 0 0 6px; }
.snapbar span { width: 26px; height: 28px; display: flex; align-items: center; justify-content: center; }
.snapbar .tog { height: 27px; margin-bottom: 1px; }
.snapbar svg { width: 16px; height: 16px; }
.snapbar i { display: block; width: 18px; height: 1.500px; background: #c3c3c3; margin: 5px 4px 6px; }
.snapbar .b, .snapbar .c { margin-bottom: 5px; }
.snapbar .a { margin-bottom: 5.500px; }

.palette { height: 16px; border-top: 1.500px solid #b4b6b4; border-bottom: 1px solid #fff; display: flex; align-items: center; padding-left: 1px; }
.none { width: 13px; height: 13px; }
.swatches { display: flex; width: 1572px; height: 13px; }
.swatches i { flex: 1; }
.more { width: 6px; height: 10px; margin-left: 4px; }
.hscroll { height: 14px; width: 1587px; background: #d5d5d5; padding: 4px 3px; }
.hscroll i { display: block; width: 441px; height: 7px; border-radius: 4px; background: #9b9d9e; }
.status { height: 27px; display: flex; align-items: center; padding: 0 0 1px 2px; }
.fs { width: 125px; display: grid; grid-template: 12.500px 12.500px / 69px 1fr; font-size: 11.500px; line-height: 12.500px; }
.status label { width: 14px; font-size: 12px; }
.status .op { width: 48px; }
.bar { width: 1px; height: 25px; background: #a6a8a6; margin-left: 2px; }
.eye { width: 13px; height: 13px; margin-left: 4px; }
.lk { width: 11px; height: 13px; margin-left: 6px; }
.layer { width: 75px; margin-left: 4px; font-weight: 700; font-size: 11.200px; padding: 0 4px 0 5px; }
.msg { width: 1134px; padding-left: 5px; white-space: nowrap; letter-spacing: .17px; }
.coords { width: 69px; height: 25px; border-left: 1px solid #a6a8a6; padding-left: 2px; display: grid; grid-template: 12.500px 12.500px / 11px 50px; font: 10.700px/12.500px "DejaVu Sans Mono", monospace; letter-spacing: -.4px; }
.coords span:nth-child(even) { text-align: right; }
.status .z { margin-left: 2px; width: 13px; }
.status .zoom { width: 56px; background: #fff; color: #3a4043; padding-left: 10px; font-size: 11px; }
.zoom b { color: #777; }
.corner { width: 12px; height: 13px; margin-left: 3px; align-self: flex-end; }

.menu { position: absolute; left: 3px; top: 43px; width: 297px; height: 366px; background: #fff; border: solid #cfcfcf; border-width: 0 1px 1px; padding-left: 4px; }
.mi { height: 21px; display: flex; align-items: center; padding-right: 7px; line-height: 20px; font-size: 12.400px; }
.mi svg { width: 16px; height: 16px; }
.mi span, .mi kbd { padding-top: 1px; }
.mi span { flex: 1; padding-left: 5px; letter-spacing: -.07px; }
.mi kbd { font: inherit; letter-spacing: .5px; margin-right: -.5px; }
.mi .sub { width: 6px; height: 10px; margin-right: -5px; }
.menu hr { border: 0; height: 1.500px; margin: 4px 4px 4.500px 0; background: #eee; }

.notes { position: absolute; left: 0; top: 0; width: 1600px; height: 878px; }
.notes text { font: 38.500px "DejaVu Sans", sans-serif; fill: #f00; }
.ruler-num { font: 8px "Open Sans", sans-serif; fill: #4a4f52; letter-spacing: .55px; }
#vruler .ruler-num { font-size: 7.500px; }
```
FILE: app.js
```js
const NS = "http://www.w3.org/2000/svg";
function add(parent, tag, attrs, text) {
  const el = document.createElementNS(NS, tag);
  for (const k in attrs) el.setAttribute(k, attrs[k]);
  if (text) el.textContent = text;
  parent.appendChild(el);
}

// Ruler step: 250 units every 87.45px, ten ticks per step.
const STEP = 87.45;
const h = document.getElementById("hruler");
let d = "M12 14.3H1193.500V9";
for (let i = -44; i <= 60; i++) {
  const x = 631.7 + i * STEP / 10;
  if (x > 1192) continue;
  const len = i % 10 === 0 ? 11 : i % 2 === 0 ? 5 : 3.5;
  d += `M${x.toFixed(1)} 14V${14 - len}`;
  if (i % 10 === 0 && i > -40) add(h, "text", { x: x + 1.5, y: 9.3, class: "ruler-num" }, String(i * 25));
}
add(h, "path", { d, stroke: "#4a4f52", fill: "none" });

// The file menu covers the upper part of the vertical ruler.
const MENU_EDGE = 279;
const v = document.getElementById("vruler");
d = `M11.500 ${MENU_EDGE}V690`;
for (let i = -30; i <= 18; i++) {
  const y = 527.7 + i * STEP / 10;
  if (y > MENU_EDGE && y < 690) {
    const len = i % 10 === 0 ? 11.5 : i % 2 === 0 ? 5 : 3;
    d += `M11.500 ${y.toFixed(1)}H${11.5 - len}`;
  }
  if (i % 10 === 0) [...String(-i * 25)].forEach((c, n) => {
    const ty = y + 8.5 + n * 7.8;
    if (ty > MENU_EDGE) add(v, "text", { x: c === "-" ? 1 : 0, y: ty, class: "ruler-num" }, c);
  });
}
add(v, "path", { d, stroke: "#4a4f52", fill: "none" });

const colors = `000000 1a1a1a 333333 4d4d4d 666666 808080 999999 b3b3b3 cccccc e6e6e6 ececec f2f2f2 f9f9f9 ffffff
800000 ff0000 808000 ffff00 008000 00ff00 008080 00ffff 000080 0000ff 800080 ff00ff
2b0000 550000 800000 aa0000 d40000 ff0000 ff2a2a ff5555 ff8080 ffaaaa ffd5d5
280b0b 501616 782121 a02c2c c83737 d35f5f de8787 e9afaf f4d7d7 241c1c 483737 6c5353 916f6f ac9393 c8b7b7 e3dbdb
2b1100 552200 803300 aa4400 d45500 ff6600 ff7f2a ff9955 ffb380 ffccaa ffe6d5
28170b 502d16 784421 a05a2c c87137 d38d5f deaa87 e9c6af f4e3d7 241f1c 483e37 6c5d53 917c6f ac9d93 c8beb7 e3dedb
2b2200 554400 806600 aa8800 d4aa00 ffcc00 ffd42a ffdd55 ffe680 ffeeaa fff6d5
28220b 504416 786721 a0892c c8ab37 d3bc5f decd87 e9ddaf f4eed7 24221c 484537 6c6753 918a6f aca793 c8c4b7 e3e2db
222b00 445500 668000 88aa00 aad400 ccff00 d4ff2a ddff55 e5ff80 eeffaa f6ffd5 22280b 445016 677821`.split(/\s+/);
const sw = document.getElementById("swatches");
for (const c of colors) {
  const i = document.createElement("i");
  i.style.background = "#" + c;
  sw.appendChild(i);
}
```
